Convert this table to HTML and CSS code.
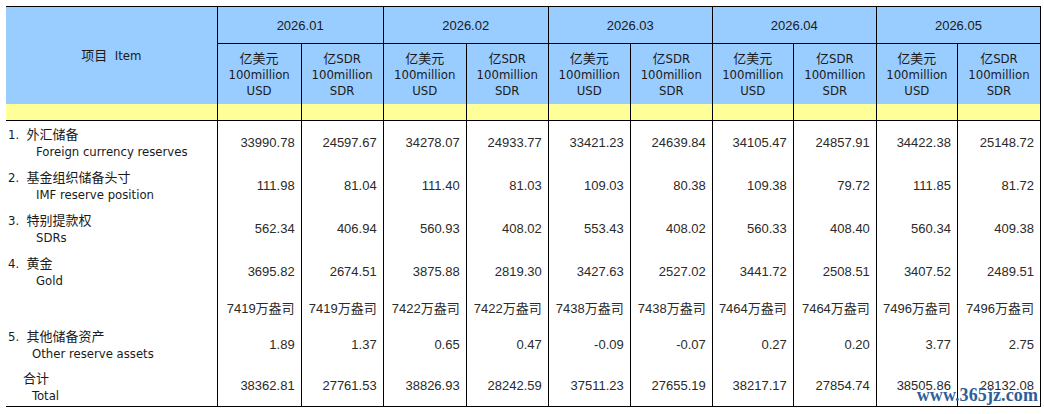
FILE: index.html
```html
<!DOCTYPE html>
<html lang="zh">
<head>
<meta charset="utf-8">
<title>官方储备资产</title>
<link rel="stylesheet" href="styles.css">
</head>
<body>
<div class="wrap">
<table class="reserve">
  <colgroup>
    <col class="c-item">
    <col class="c-a"><col class="c-b">
    <col class="c-c"><col class="c-b">
    <col class="c-b"><col class="c-b">
    <col class="c-d"><col class="c-c">
    <col class="c-d"><col class="c-c">
  </colgroup>
  <thead>
    <tr class="h1">
      <th rowspan="2" class="item-head">项目&nbsp; Item</th>
      <th colspan="2" class="month">2026.01</th>
      <th colspan="2" class="month">2026.02</th>
      <th colspan="2" class="month">2026.03</th>
      <th colspan="2" class="month">2026.04</th>
      <th colspan="2" class="month">2026.05</th>
    </tr>
    <tr class="h2">
      <th class="unit">亿美元<br>100million<br>USD</th><th class="unit">亿SDR<br>100million<br>SDR</th>
      <th class="unit">亿美元<br>100million<br>USD</th><th class="unit">亿SDR<br>100million<br>SDR</th>
      <th class="unit">亿美元<br>100million<br>USD</th><th class="unit">亿SDR<br>100million<br>SDR</th>
      <th class="unit">亿美元<br>100million<br>USD</th><th class="unit">亿SDR<br>100million<br>SDR</th>
      <th class="unit">亿美元<br>100million<br>USD</th><th class="unit">亿SDR<br>100million<br>SDR</th>
    </tr>
    <tr class="spacer">
      <td></td><td></td><td></td><td></td><td></td><td></td><td></td><td></td><td></td><td></td><td></td>
    </tr>
  </thead>
  <tbody>
    <tr class="r">
      <td class="label"><div class="zh">1.&nbsp; 外汇储备</div><div class="en i1">Foreign currency reserves</div></td>
      <td class="num">33990.78</td><td class="num">24597.67</td>
      <td class="num">34278.07</td><td class="num">24933.77</td>
      <td class="num">33421.23</td><td class="num">24639.84</td>
      <td class="num">34105.47</td><td class="num">24857.91</td>
      <td class="num">34422.38</td><td class="num">25148.72</td>
    </tr>
    <tr class="r">
      <td class="label"><div class="zh">2.&nbsp; 基金组织储备头寸</div><div class="en i1">IMF reserve position</div></td>
      <td class="num">111.98</td><td class="num">81.04</td>
      <td class="num">111.40</td><td class="num">81.03</td>
      <td class="num">109.03</td><td class="num">80.38</td>
      <td class="num">109.38</td><td class="num">79.72</td>
      <td class="num">111.85</td><td class="num">81.72</td>
    </tr>
    <tr class="r">
      <td class="label"><div class="zh">3.&nbsp; 特别提款权</div><div class="en i1">SDRs</div></td>
      <td class="num">562.34</td><td class="num">406.94</td>
      <td class="num">560.93</td><td class="num">408.02</td>
      <td class="num">553.43</td><td class="num">408.02</td>
      <td class="num">560.33</td><td class="num">408.40</td>
      <td class="num">560.34</td><td class="num">409.38</td>
    </tr>
    <tr class="r">
      <td class="label"><div class="zh">4.&nbsp; 黄金</div><div class="en i1">Gold</div></td>
      <td class="num">3695.82</td><td class="num">2674.51</td>
      <td class="num">3875.88</td><td class="num">2819.30</td>
      <td class="num">3427.63</td><td class="num">2527.02</td>
      <td class="num">3441.72</td><td class="num">2508.51</td>
      <td class="num">3407.52</td><td class="num">2489.51</td>
    </tr>
    <tr class="r oz">
      <td class="label"></td>
      <td class="num">7419万盎司</td><td class="num">7419万盎司</td>
      <td class="num">7422万盎司</td><td class="num">7422万盎司</td>
      <td class="num">7438万盎司</td><td class="num">7438万盎司</td>
      <td class="num">7464万盎司</td><td class="num">7464万盎司</td>
      <td class="num">7496万盎司</td><td class="num">7496万盎司</td>
    </tr>
    <tr class="r">
      <td class="label"><div class="zh">5.&nbsp; 其他储备资产</div><div class="en i2">Other reserve assets</div></td>
      <td class="num">1.89</td><td class="num">1.37</td>
      <td class="num">0.65</td><td class="num">0.47</td>
      <td class="num">-0.09</td><td class="num">-0.07</td>
      <td class="num">0.27</td><td class="num">0.20</td>
      <td class="num">3.77</td><td class="num">2.75</td>
    </tr>
    <tr class="r total">
      <td class="label"><div class="zh i3">合计</div><div class="en i2">Total</div></td>
      <td class="num">38362.81</td><td class="num">27761.53</td>
      <td class="num">38826.93</td><td class="num">28242.59</td>
      <td class="num">37511.23</td><td class="num">27655.19</td>
      <td class="num">38217.17</td><td class="num">27854.74</td>
      <td class="num">38505.86</td><td class="num">28132.08</td>
    </tr>
  </tbody>
</table>
<div class="watermark">www.365jz.com</div>
</div>
</body>
</html>
```
FILE: styles.css
```css
html, body {
  margin: 0;
  padding: 0;
  background: #ffffff;
}
.wrap {
  position: relative;
  padding: 6px 0 0 6px;
  width: 1038px;
}
.reserve {
  border-collapse: collapse;
  table-layout: fixed;
  width: 1035px;
  border-top: 1px solid #000;
  border-right: 1px solid #000;
  border-bottom: 1px solid #000;
  font-family: "DejaVu Sans Condensed", "Noto Sans CJK SC", sans-serif;
  font-size: 13px;
  color: #1a1a1a;
}
.c-item { width: 211px; }
.c-a { width: 84px; }
.c-b { width: 82px; }
.c-c { width: 83px; }
.c-d { width: 81px; }

.reserve th, .reserve td {
  padding: 0;
  border-left: 1px solid #000;
}
.reserve tr > :first-child {
  border-left: none;
}
.reserve .h1 th, .reserve .h2 th {
  background: #99ccff;
  font-weight: normal;
  text-align: center;
}
.reserve .item-head {
  border-right: 1px solid #000;
  vertical-align: middle;
  padding-bottom: 2px;
}
.h1 { height: 37px; }
.reserve .month {
  font-family: "Liberation Sans", sans-serif;
  font-size: 13px;
  border-bottom: 1px solid #000;
  vertical-align: middle;
}
.h2 { height: 60px; }
.reserve .unit {
  line-height: 16px;
  vertical-align: middle;
  padding-top: 2px;
}
.spacer { height: 17px; }
.reserve .spacer td {
  background: #ffff99;
  border-bottom: 1px solid #000;
}
.r { height: 43px; }
.r.oz { height: 30px; }
.r.total { height: 41px; }
.reserve .label {
  vertical-align: middle;
  line-height: 17px;
  padding-left: 2px;
  padding-top: 2px;
  text-align: left;
}
.reserve .label .en { padding-left: 28px; }
.reserve .label .en.i2 { padding-left: 24px; }
.reserve .label .zh.i3 { padding-left: 15px; }
.reserve .num {
  font-family: "Liberation Sans", "Noto Sans CJK SC", sans-serif;
  font-size: 13px;
  color: #2a2a2a;
  text-align: right;
  vertical-align: middle;
  padding-right: 6px;
}
.watermark {
  position: absolute;
  right: 6px;
  top: 385px;
  font-family: "Liberation Serif", serif;
  font-weight: bold;
  font-size: 18px;
  color: #2f5f9a;
  letter-spacing: 0.1px;
}
```
